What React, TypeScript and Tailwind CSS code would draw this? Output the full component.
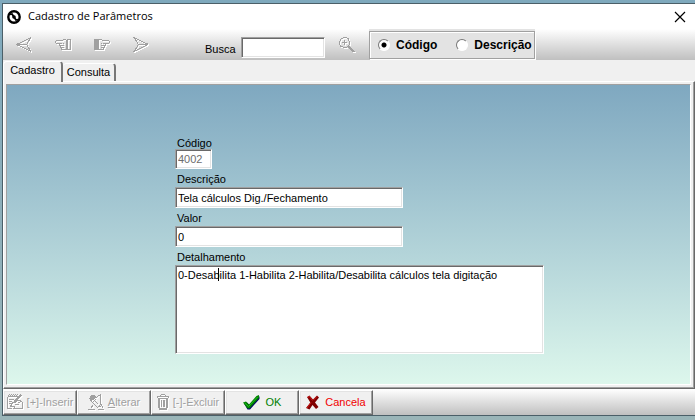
import React, { useState } from "react";

type IconProps = {
  width: number;
  height: number;
  children: React.ReactNode;
};

// Disabled glyph: gray strokes over a white copy shifted down and right
const DisabledIcon: React.FC<IconProps> = ({ width, height, children }) => (
  <svg
    width={width}
    height={height}
    viewBox={`0 0 ${width} ${height}`}
    fill="none"
    shapeRendering="crispEdges"
    className="shrink-0"
    aria-hidden="true"
  >
    <g className="text-white" stroke="currentColor" transform="translate(1 1)">
      {children}
    </g>
    <g className="text-[#a0a0a0]" stroke="currentColor">
      {children}
    </g>
  </svg>
);

const ArrowShape = () => (
  <path d="M.5 7.5 15.5.5M.5 7.5 15.5 14.5M15 .5 10.5 7.5 15 14.5M1 7.5H11" />
);

// Hand pointing left
const HandLeftShape = () => (
  <path d="M1 1.5H8M.5 2V4M1 4.5H7M8 .5H11M4.5 5V6.5H8M5.5 7V8.5H8M6.5 9V10.5H11M8.5 4V5M8.5 6V7M8.5 8V9M11.5 .5V10.5M12.5 .5V10.5M15.5 .5V11M12 .5H16M12 10.5H16" />
);

// Hand pointing right, its cuff is solid
const HandRightShape = () => (
  <>
    <path d="M.5 .5H4.5V10.5H.5Z" fill="currentColor" />
    <path d="M8 1.5H15M15.5 2V4M9 4.5H15M5 .5H8M11.5 5V6.5H8M10.5 7V8.5H8M9.5 9V10.5H5M7.5 4V5M7.5 6V7M7.5 8V9" />
  </>
);

const SearchShape = () => (
  <>
    <path d="M3.5 .5H7.5M1.5 1.5H3.5M7.5 1.5H9.5M1.5 2V3.5M.5 3.5V7.5M1.5 7.5V9.5M9.5 2V3.5M10.5 3.5V7.5M9.5 7.5V9.5M2 9.5H4M7.5 9.5H9.5M3.5 10.5H7.5" />
    <path d="M5.5 3V8M3 5.5H8M10 9.5 15.5 15M9.5 10.5 14.5 15.5M10.5 9.5V11" />
  </>
);

// Notepad with a hand writing on it
const InsertShape = () => (
  <>
    <path d="M.5 3V14.5H5M1 1.5H2M3 1.5H4M5 1.5H6M7 1.5H8M9 1.5H10M2.5 0V1M4.5 0V1M6.5 0V1M8.5 0V1M10.5 0V1M1 2.5H12M14.5 1 7.5 8M13.5.5 6.5 7.5" />
    <path d="M2 5.5H7M2 7.5H5M2 9.5H4M5.5 8.5 3.5 12.5H8M6 8.5H8L10.5 6.5H13L15.5 8.5V14.5M8 10.5H12M8 12.5 6.5 14.5H15.5M10.5 8.5H12.5" />
  </>
);

const EditShape = () => (
  <>
    <path d="M1.5 4.5 3.5 1.5H6.5L7.5 3.5 5.5 5.5H2.5Z" fill="currentColor" />
    <path d="M2.5 6 4.5 8.5 7.5 5.5M8 3.5 12.5.5V10.5L9.5 13.5 6.5 10.5 4.5 8.5M7.5 7.5 10.5 10.5M13 10.5 15.5 14.5M9.5 12.5H13M5 11.5 2.5 14.5M0 15.5H7M10 15.5H16" />
  </>
);

const TrashShape = () => (
  <path d="M4 .5H8M3.5 1V2M8.5 1V2M.5 3.5V2.5H11.5V3.5M1 4.5H11M2.5 5V14.5H9.5V5M4.5 6V13M6.5 6V13M7.5 6V13M1.5 5V14M10.5 5V14M2 15.5H10" />
);

const Logo = () => (
  <svg width="14" height="14" viewBox="0 0 14 14" aria-hidden="true">
    <circle cx="7" cy="7" r="5.7" fill="none" stroke="#000" strokeWidth="2.4" />
    <circle cx="7" cy="7" r="1.8" />
    <path
      d="M3 4.5 5 4 7 7 9 10 11 9.5"
      fill="none"
      stroke="#000"
      strokeWidth="1.8"
    />
  </svg>
);

const CheckIcon = () => (
  <svg width="17" height="15" viewBox="0 0 17 15" aria-hidden="true">
    <path d="M1 8.5 4 7.5 6.5 10 14 1.5 16.5 1.5V4L7 14.5H4.5Z" fill="#00006a" />
    <path d="M0 7.5 3 6.5 6 9.5 13.5 1 16 0V3L6.5 13.5H4.5Z" fill="#008000" />
    <path d="M1.5 7.8 5.5 11.5 14.5 2" fill="none" stroke="#22c022" />
  </svg>
);

const CrossIcon = () => (
  <svg width="13" height="15" viewBox="0 0 13 15" aria-hidden="true">
    <path
      d="M1 2 3.5.5 7 4.5 11 .5 13 2.5 9 7.5 12.5 12 10 14 6.5 10 3.5 14.5 0 13 4.3 7.5Z"
      fill="#800000"
    />
    <path
      d="M1.5 2.5 3.5 1.5 6.5 5.5M7.5 5 11 1.5M1 13 5 7.5"
      fill="none"
      stroke="#d01818"
    />
  </svg>
);

const toolButton = "flex h-6 w-[39px] items-center";

const sunken =
  "block border border-t-[#a0a0a0] border-l-[#a0a0a0] border-r-white border-b-white bg-white px-0.5 shadow-[inset_1px_1px_0_#696969,inset_-1px_-1px_0_#e3e3e3] outline-none";

const fieldLabel = "block w-fit px-0.5 leading-3";

type RadioProps = {
  label: string;
  checked: boolean;
  onChange: () => void;
};

const Radio: React.FC<RadioProps> = ({ label, checked, onChange }) => (
  <label className="flex items-center gap-1.5 text-xs font-bold">
    <input
      type="radio"
      name="busca-por"
      checked={checked}
      onChange={onChange}
      className="size-3 appearance-none rounded-full border border-t-[#777] border-l-[#777] border-r-white border-b-white bg-white checked:bg-[radial-gradient(circle,#000_2px,#fff_3px)]"
    />
    {label}
  </label>
);

type ActionButtonProps = {
  disabled?: boolean;
  className: string;
  icon: React.ReactNode;
  children: React.ReactNode;
};

const ActionButton: React.FC<ActionButtonProps> = ({
  disabled,
  className,
  icon,
  children,
}) => (
  <button
    type="button"
    disabled={disabled}
    className={`flex h-[25px] w-[74px] items-center justify-center whitespace-nowrap border border-t-white border-l-white border-r-[#696969] border-b-[#696969] bg-[#f0f0f0] shadow-[inset_-1px_-1px_0_#a0a0a0,inset_1px_1px_0_#e3e3e3] ${className}`}
  >
    {icon}
    <span>{children}</span>
  </button>
);

const disabledText = "text-[#a0a0a0] [text-shadow:1px_1px_0_#fff]";

const App: React.FC = () => {
  const [searchBy, setSearchBy] = useState<"codigo" | "descricao">("codigo");
  const [search, setSearch] = useState("");
  const [description, setDescription] = useState(
    "Tela cálculos Dig./Fechamento"
  );
  const [value, setValue] = useState("0");
  const [details, setDetails] = useState(
    "0-Desabilita 1-Habilita 2-Habilita/Desabilita cálculos tela digitação"
  );

  return (
    <div className="flex min-h-screen flex-col bg-linear-to-b from-[#7fa9bd] to-[#9ab5b8] pt-[3px] pb-1 pl-0.5 font-['Liberation_Sans',Arial,sans-serif] text-[11px] text-black">
      <main className="flex flex-1 flex-col border-y border-l border-[#4b5f68] bg-[#f0f0f0]">
        <header className="flex h-[25px] items-center justify-between bg-white pr-[9px] pl-1">
          <div className="flex items-center gap-[7px]">
            <Logo />
            <h1 className="font-['Open_Sans',sans-serif] text-[11px]">
              Cadastro de Parâmetros
            </h1>
          </div>
          <button type="button" aria-label="Fechar">
            <svg width="12" height="12" viewBox="0 0 12 12" stroke="#000">
              <path d="M1 1 11 11M11 1 1 11" strokeWidth="1.2" />
            </svg>
          </button>
        </header>

        <div className="flex h-[31px] bg-linear-to-b from-white to-[#c0c0c0] pl-[13px]">
          <div className="flex pt-1">
            <button type="button" disabled aria-label="Primeiro" className={toolButton}>
              <DisabledIcon width={17} height={17}>
                <ArrowShape />
              </DisabledIcon>
            </button>
            <button type="button" disabled aria-label="Anterior" className={toolButton}>
              <DisabledIcon width={17} height={12}>
                <HandLeftShape />
              </DisabledIcon>
            </button>
            <button type="button" disabled aria-label="Próximo" className={toolButton}>
              <DisabledIcon width={17} height={12}>
                <HandRightShape />
              </DisabledIcon>
            </button>
            <button type="button" disabled aria-label="Último" className={toolButton}>
              <DisabledIcon width={17} height={17}>
                <g transform="translate(16 0) scale(-1 1)">
                  <ArrowShape />
                </g>
              </DisabledIcon>
            </button>
          </div>
          <label htmlFor="busca" className="mt-3 ml-[33px] w-9 leading-4">
            Busca
          </label>
          <input
            id="busca"
            value={search}
            onChange={(e) => setSearch(e.target.value)}
            className={`mt-2 h-[21px] w-[84px] ${sunken}`}
          />
          <button type="button" disabled aria-label="Buscar" className="ml-3.5 pt-0.5">
            <DisabledIcon width={17} height={17}>
              <SearchShape />
            </DisabledIcon>
          </button>
          <div className="ml-[13px] h-[30px] bg-[#e3e3e3] pt-0.5">
            <div
              role="radiogroup"
              aria-label="Buscar por"
              className="flex h-7 items-center gap-[19px] border border-[#a0a0a0] pr-0.5 pl-2 shadow-[1px_1px_0_#fff,inset_1px_1px_0_#fff]"
            >
              <Radio
                label="Código"
                checked={searchBy === "codigo"}
                onChange={() => setSearchBy("codigo")}
              />
              <Radio
                label="Descrição"
                checked={searchBy === "descricao"}
                onChange={() => setSearchBy("descricao")}
              />
            </div>
          </div>
        </div>

        <div role="tablist" className="flex h-[21px] items-end">
          <button
            type="button"
            role="tab"
            aria-selected="true"
            className="relative top-px h-[21px] w-[60px] rounded-t-sm border-t border-r-2 border-l border-t-white border-r-[#777] border-l-white bg-[#f0f0f0] pb-1"
          >
            Cadastro
          </button>
          <button
            type="button"
            role="tab"
            aria-selected="false"
            className="h-[18px] w-[53px] rounded-t-sm border-t border-r-2 border-t-white border-r-[#777]"
          >
            Consulta
          </button>
        </div>

        <section className="flex flex-1 flex-col border border-t-white border-l-white border-r-[#696969] border-b-[#696969] pt-0.5 pr-[3px] pb-[3px] pl-0.5 shadow-[inset_-1px_-1px_0_#a0a0a0]">
          <form className="flex-1 border border-t-[#a0a0a0] border-l-[#a0a0a0] border-r-white border-b-white bg-linear-to-b from-[#7fa8c0] to-[#ddf7ec] pt-[52px] pr-4 pb-[30px] pl-[168px]">
            <label htmlFor="codigo" className={fieldLabel}>
              Código
            </label>
            <input
              id="codigo"
              value="4002"
              disabled
              className={`h-5 w-[37px] text-[#6d6d6d] ${sunken}`}
            />
            <label htmlFor="descricao" className={`mt-1 mb-0.5 ${fieldLabel}`}>
              Descrição
            </label>
            <input
              id="descricao"
              value={description}
              onChange={(e) => setDescription(e.target.value)}
              className={`h-[21px] w-[228px] ${sunken}`}
            />
            <label htmlFor="valor" className={`mt-1 mb-0.5 ${fieldLabel}`}>
              Valor
            </label>
            <input
              id="valor"
              value={value}
              onChange={(e) => setValue(e.target.value)}
              className={`h-[21px] w-[228px] ${sunken}`}
            />
            <label htmlFor="detalhamento" className={`mt-1 mb-0.5 ${fieldLabel}`}>
              Detalhamento
            </label>
            <div className="relative w-[369px] max-w-full">
              <textarea
                id="detalhamento"
                value={details}
                onChange={(e) => setDetails(e.target.value)}
                className={`h-[89px] w-full resize-none py-[3px] leading-3 ${sunken}`}
              />
              {/* text caret */}
              <span className="absolute top-[3px] left-[43px] h-[13px] w-px bg-black" />
            </div>
          </form>
        </section>

        <footer className="flex bg-linear-to-b from-white to-[#c0c0c0] pt-px">
          <ActionButton
            disabled
            className={`gap-[3px] ${disabledText}`}
            icon={
              <DisabledIcon width={17} height={17}>
                <InsertShape />
              </DisabledIcon>
            }
          >
            [+]-Inserir
          </ActionButton>
          <ActionButton
            disabled
            className={`gap-[3px] ${disabledText}`}
            icon={
              <DisabledIcon width={17} height={17}>
                <EditShape />
              </DisabledIcon>
            }
          >
            <u>A</u>lterar
          </ActionButton>
          <ActionButton
            disabled
            className={`gap-[3px] ${disabledText}`}
            icon={
              <DisabledIcon width={13} height={17}>
                <TrashShape />
              </DisabledIcon>
            }
          >
            [-]-Excluir
          </ActionButton>
          <ActionButton className="gap-1.5 text-[#008000]" icon={<CheckIcon />}>
            OK
          </ActionButton>
          <ActionButton className="gap-1.5 text-[#f00000]" icon={<CrossIcon />}>
            Cancela
          </ActionButton>
        </footer>
      </main>
    </div>
  );
};

export default App;
